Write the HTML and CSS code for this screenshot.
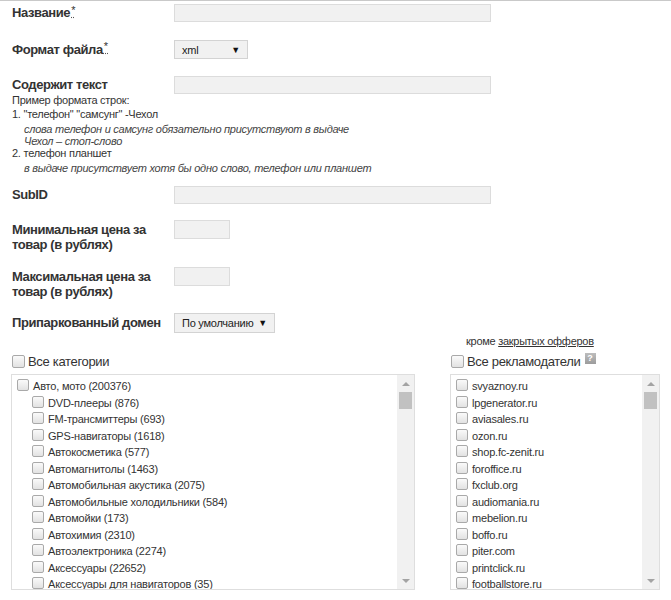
FILE: index.html
```html
<!DOCTYPE html>
<html lang="ru">
<head>
<meta charset="utf-8">
<title>Форма</title>
<link rel="stylesheet" href="styles.css">
</head>
<body>
<div class="page">
  <div class="row r-name">
    <div class="lbl">Название<abbr class="req">*</abbr></div>
    <div class="input wide"></div>
  </div>
  <div class="row r-format">
    <div class="lbl tall">Формат файла<abbr class="req">*</abbr></div>
    <div class="select sel-format"><span>xml</span><span class="tri">▼</span></div>
  </div>
  <div class="row r-text">
    <div class="lbl">Содержит текст</div>
    <div class="input wide"></div>
  </div>
  <div class="hint">
    <div class="hint-title">Пример формата строк:</div>
    <div class="hint-item">1. "телефон" "самсунг" -Чехол</div>
    <div class="hint-note first">слова телефон и самсунг обязательно присутствуют в выдаче</div>
    <div class="hint-note">Чехол – стоп-слово</div>
    <div class="hint-item second">2. телефон планшет</div>
    <div class="hint-note first">в выдаче присутствует хотя бы одно слово, телефон или планшет</div>
  </div>
  <div class="row r-subid">
    <div class="lbl">SubID</div>
    <div class="input wide"></div>
  </div>
  <div class="row r-min">
    <div class="lbl two">Минимальная цена за товар (в рублях)</div>
    <div class="input small"></div>
  </div>
  <div class="row r-max">
    <div class="lbl two">Максимальная цена за товар (в рублях)</div>
    <div class="input small"></div>
  </div>
  <div class="row r-park">
    <div class="lbl park">Припаркованный домен</div>
    <div class="select sel-park"><span>По умолчанию</span><span class="tri">▼</span></div>
  </div>

  <div class="lists">
    <div class="empty"></div>
    <div class="except">кроме <a href="#" class="link">закрытых офферов</a></div>

    <label class="head"><span class="cb"></span>Все категории</label>
    <label class="head"><span class="cb"></span>Все рекламодатели <span class="help">?</span></label>

    <div class="listbox">
      <div class="items">
        <div class="item"><span class="cb"></span>Авто, мото (200376)</div>
        <div class="item sub"><span class="cb"></span>DVD-плееры (876)</div>
        <div class="item sub"><span class="cb"></span>FM-трансмиттеры (693)</div>
        <div class="item sub"><span class="cb"></span>GPS-навигаторы (1618)</div>
        <div class="item sub"><span class="cb"></span>Автокосметика (577)</div>
        <div class="item sub"><span class="cb"></span>Автомагнитолы (1463)</div>
        <div class="item sub"><span class="cb"></span>Автомобильная акустика (2075)</div>
        <div class="item sub"><span class="cb"></span>Автомобильные холодильники (584)</div>
        <div class="item sub"><span class="cb"></span>Автомойки (173)</div>
        <div class="item sub"><span class="cb"></span>Автохимия (2310)</div>
        <div class="item sub"><span class="cb"></span>Автоэлектроника (2274)</div>
        <div class="item sub"><span class="cb"></span>Аксессуары (22652)</div>
        <div class="item sub"><span class="cb"></span>Аксессуары для навигаторов (35)</div>
      </div>
      <div class="sbar">
        <div class="sbtn"><span class="up"></span></div>
        <div class="thumb"></div>
        <div class="track"></div>
        <div class="sbtn"><span class="down"></span></div>
      </div>
    </div>

    <div class="listbox">
      <div class="items">
        <div class="item"><span class="cb"></span>svyaznoy.ru</div>
        <div class="item"><span class="cb"></span>lpgenerator.ru</div>
        <div class="item"><span class="cb"></span>aviasales.ru</div>
        <div class="item"><span class="cb"></span>ozon.ru</div>
        <div class="item"><span class="cb"></span>shop.fc-zenit.ru</div>
        <div class="item"><span class="cb"></span>foroffice.ru</div>
        <div class="item"><span class="cb"></span>fxclub.org</div>
        <div class="item"><span class="cb"></span>audiomania.ru</div>
        <div class="item"><span class="cb"></span>mebelion.ru</div>
        <div class="item"><span class="cb"></span>boffo.ru</div>
        <div class="item"><span class="cb"></span>piter.com</div>
        <div class="item"><span class="cb"></span>printclick.ru</div>
        <div class="item"><span class="cb"></span>footballstore.ru</div>
      </div>
      <div class="sbar">
        <div class="sbtn"><span class="up"></span></div>
        <div class="thumb"></div>
        <div class="track"></div>
        <div class="sbtn"><span class="down"></span></div>
      </div>
    </div>
  </div>
</div>
</body>
</html>
```

FILE: styles.css
```css
html, body {
  margin: 0;
  padding: 0;
  background: #fff;
}
body {
  font-family: "Liberation Sans", Arial, sans-serif;
  color: #333;
  overflow: hidden;
}
.page {
  border-top: 1px solid #c9c9c9;
  height: 599px;
}
.row {
  display: flex;
  align-items: flex-start;
  padding-left: 12px;
}
.lbl {
  width: 162px;
  font-size: 13px;
  font-weight: bold;
  letter-spacing: -0.4px;
  line-height: 18px;
  color: #333;
}
.lbl.tall { line-height: 19px; }
.lbl.two {
  width: 150px;
  margin-right: 12px;
  line-height: 15px;
  padding-top: 2px;
}
.lbl.park { line-height: 20px; }
.req {
  font-weight: normal;
  font-size: 11px;
  letter-spacing: 0;
  vertical-align: top;
  line-height: 12px;
  margin-left: 1px;
  text-decoration: underline dotted #555;
  text-underline-offset: 3px;
}
.r-name { margin-top: 3px; }
.r-format { margin-top: 18px; }
.r-text { margin-top: 17px; }
.r-subid { margin-top: 12px; }
.r-min { margin-top: 16px; }
.r-max { margin-top: 15px; }
.r-park { margin-top: 14px; }

.input {
  box-sizing: border-box;
  height: 18px;
  background: #f1f1f1;
  border: 1px solid #dcdcdc;
}
.input.wide { width: 317px; }
.input.small { width: 56px; height: 19px; }

.select {
  box-sizing: border-box;
  display: flex;
  align-items: center;
  justify-content: space-between;
  background: #f1f1f1;
  border: 1px solid #d3d3d3;
  font-size: 11px;
  letter-spacing: -0.25px;
  color: #222;
  padding: 0 7px 0 7px;
}
.sel-format { width: 74px; height: 19px; }
.sel-park { width: 101px; height: 20px; }
.tri {
  font-size: 9px;
  color: #111;
}

.hint {
  padding-left: 12px;
  font-size: 11px;
  letter-spacing: -0.25px;
  color: #333;
}
.hint-title { line-height: 13px; }
.hint-item { line-height: 13px; margin-top: 1px; }
.hint-item.second { margin-top: 0; }
.hint-note {
  padding-left: 12px;
  font-style: italic;
  line-height: 12px;
  color: #444;
}
.hint-note.first { margin-top: 2px; }

.lists {
  display: grid;
  grid-template-columns: 404px 210px;
  column-gap: 35px;
  padding-left: 11px;
}
.except {
  margin-top: 2px;
  line-height: 13px;
  font-size: 11px;
  letter-spacing: -0.27px;
  padding-left: 16px;
  color: #333;
}
.link {
  color: #333;
  text-decoration: underline;
}
.head {
  display: flex;
  align-items: center;
  height: 18px;
  margin-top: 4px;
  font-size: 13px;
  letter-spacing: -0.32px;
  color: #333;
}
.head .cb {
  width: 13px;
  height: 13px;
  margin: 0 3px 0 1px;
}
.help {
  display: inline-flex;
  align-items: center;
  justify-content: center;
  width: 11px;
  height: 11px;
  margin-left: 4px;
  margin-top: -6px;
  background: linear-gradient(#bdbdbd, #9c9c9c);
  color: #fff;
  font-size: 9px;
  font-weight: bold;
  letter-spacing: 0;
  line-height: 11px;
}
.cb {
  display: inline-block;
  box-sizing: border-box;
  width: 12px;
  height: 12px;
  border: 1px solid #a9a9a9;
  border-radius: 2px;
  background: linear-gradient(#fafafa, #e2e2e2);
  flex: none;
}

.listbox {
  box-sizing: border-box;
  margin-top: 4px;
  height: 216px;
  border: 1px solid #dedede;
  display: flex;
  overflow: hidden;
}
.items {
  flex: 1;
  padding-top: 3px;
  overflow: hidden;
}
.item {
  display: flex;
  align-items: center;
  height: 16.5px;
  font-size: 11px;
  letter-spacing: -0.2px;
  color: #333;
  white-space: nowrap;
}
.item .cb {
  margin: -2px 4px 0 5px;
}
.item.sub { padding-left: 15px; }

.sbar {
  width: 17px;
  flex: none;
  display: flex;
  flex-direction: column;
  background: #f1f1f1;
}
.sbtn {
  height: 17px;
  display: flex;
  align-items: center;
  justify-content: center;
}
.up, .down {
  width: 0;
  height: 0;
  border-left: 4px solid transparent;
  border-right: 4px solid transparent;
}
.up { border-bottom: 4px solid #a3a3a3; }
.down { border-top: 4px solid #a3a3a3; }
.thumb {
  height: 17px;
  margin: 0 2px;
  background: #c1c1c1;
}
.track { flex: 1; }
```
